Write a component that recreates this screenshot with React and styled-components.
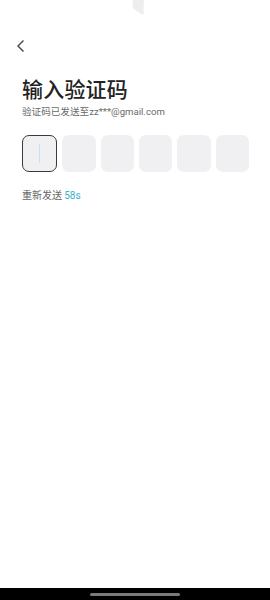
import React from 'react';
import styled, { createGlobalStyle } from 'styled-components';

const GlobalStyle = createGlobalStyle`
  html, body {
    margin: 0;
    padding: 0;
    background: #fff;
  }
  body {
    font-family: "Noto Sans CJK SC", "Noto Sans", sans-serif;
  }
`;

const Screen = styled.div`
  width: 270px;
  height: 600px;
  display: flex;
  flex-direction: column;
  background: #fff;
  overflow: hidden;
`;

const StatusArea = styled.div`
  height: 31px;
  display: flex;
  justify-content: center;
  svg { margin-left: 8px; }
`;

const BackButton = styled.div`
  height: 30px;
  padding-left: 16px;
  display: flex;
  align-items: center;
`;

const Content = styled.div`
  flex: 1;
  padding: 12px 21px 0 22px;
  display: flex;
  flex-direction: column;
`;

const Title = styled.h1`
  margin: 0;
  font-size: 21px;
  line-height: 30px;
  font-weight: 500;
  color: #222;
  letter-spacing: 0.2px;
`;

const Subtitle = styled.p`
  margin: 2px 0 0;
  font-size: 9.6px;
  line-height: 14px;
  color: #6a6a6a;
  font-family: "Roboto", "Noto Sans CJK SC", sans-serif;
`;

const CodeRow = styled.div`
  margin-top: 16px;
  display: flex;
  gap: 5px;
`;

const CodeBox = styled.div`
  flex: 1;
  height: 37px;
  box-sizing: border-box;
  border-radius: 7px;
  background: #f0f0f2;
  border: ${(p) => (p.$active ? '1px solid #3a3a3a' : 'none')};
  display: flex;
  align-items: center;
  justify-content: center;
`;

const Caret = styled.span`
  width: 1px;
  height: 19px;
  background: #c6e2ee;
`;

const Resend = styled.p`
  margin: 16px 0 0;
  font-size: 10px;
  line-height: 14px;
  color: #666;
`;

const Countdown = styled.span`
  color: #3bb3c9;
  font-family: "Roboto", sans-serif;
`;

const NavBar = styled.div`
  height: 12px;
  background: #000;
  display: flex;
  align-items: center;
  justify-content: center;
`;

const NavPill = styled.div`
  width: 90px;
  height: 3px;
  border-radius: 2px;
  background: #7a7a7a;
`;

export default function App() {
  return (
    <Screen>
      <GlobalStyle />
      <StatusArea>
        <svg width="14" height="15" viewBox="0 0 14 15">
          <path d="M1 0 H12 C12 4 11 8 12 12 C12 15 10 15 9 14 L3 10 C1 9 0 6 1 0 Z" fill="#eeeef0" />
        </svg>
      </StatusArea>
      <BackButton>
        <svg width="10" height="14" viewBox="0 0 10 14">
          <path d="M7.5 1.5 L2 7 L7.5 12.5" fill="none" stroke="#444" strokeWidth="1.4" />
        </svg>
      </BackButton>
      <Content>
        <Title>输入验证码</Title>
        <Subtitle>验证码已发送至zz***@gmail.com</Subtitle>
        <CodeRow>
          {[0, 1, 2, 3, 4, 5].map((i) => (
            <CodeBox key={i} $active={i === 0}>
              {i === 0 && <Caret />}
            </CodeBox>
          ))}
        </CodeRow>
        <Resend>
          重新发送 <Countdown>58s</Countdown>
        </Resend>
      </Content>
      <NavBar>
        <NavPill />
      </NavBar>
    </Screen>
  );
}
